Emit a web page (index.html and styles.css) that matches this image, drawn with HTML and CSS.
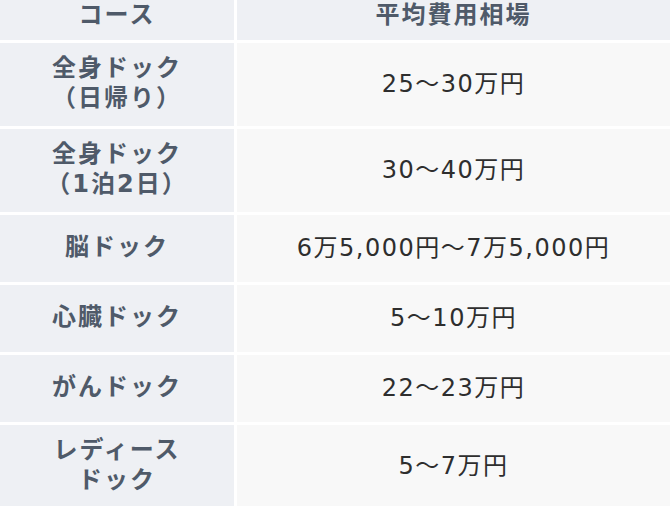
FILE: index.html
```html
<!DOCTYPE html>
<html lang="ja">
<head>
<meta charset="utf-8">
<title>人間ドック 費用相場</title>
<link rel="stylesheet" href="styles.css">
</head>
<body>
<table class="price-table">
  <thead>
    <tr>
      <th class="col-course">コース</th>
      <th class="col-price">平均費用相場</th>
    </tr>
  </thead>
  <tbody>
    <tr>
      <th class="course">全身ドック<br>（日帰り）</th>
      <td class="price">25～30万円</td>
    </tr>
    <tr>
      <th class="course">全身ドック<br>（1泊2日）</th>
      <td class="price">30～40万円</td>
    </tr>
    <tr>
      <th class="course">脳ドック</th>
      <td class="price">6万5,000円～7万5,000円</td>
    </tr>
    <tr>
      <th class="course">心臓ドック</th>
      <td class="price">5～10万円</td>
    </tr>
    <tr>
      <th class="course">がんドック</th>
      <td class="price">22～23万円</td>
    </tr>
    <tr>
      <th class="course">レディース<br>ドック</th>
      <td class="price">5～7万円</td>
    </tr>
  </tbody>
</table>
</body>
</html>
```

FILE: styles.css
```css
html, body {
  margin: 0;
  padding: 0;
  background: #ffffff;
}

body {
  font-family: "DejaVu Sans", "Noto Sans CJK JP", sans-serif;
  overflow: hidden;
}

.price-table {
  width: 670px;
  border-collapse: separate;
  border-spacing: 0;
  table-layout: fixed;
}

.price-table th,
.price-table td {
  box-sizing: border-box;
  border-right: 3px solid #ffffff;
  border-bottom: 3px solid #ffffff;
  text-align: center;
  vertical-align: middle;
  font-size: 24px;
}

.price-table tr > :last-child {
  border-right: none;
}

.col-course {
  width: 237px;
}

thead th {
  background: #eef0f4;
  color: #4f5a69;
  font-weight: bold;
  line-height: 30px;
  letter-spacing: 2px;
}

.price-table thead th {
  padding: 0 4px 10px;
}

.course {
  background: #eef0f4;
  color: #4f5a69;
  font-weight: bold;
  line-height: 30px;
  letter-spacing: 2px;
  padding: 10px 4px 13px;
}

.price {
  background: #f8f8f8;
  color: #2e2e2e;
  font-weight: normal;
  line-height: 44px;
  letter-spacing: 1.5px;
  padding: 11px 4px 12px;
}
```
